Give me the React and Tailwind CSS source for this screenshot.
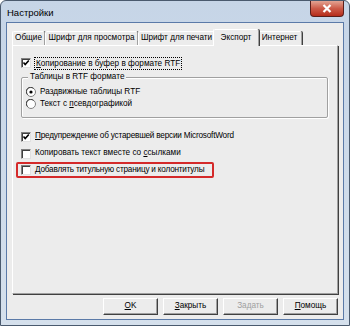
import React from "react";

const font = { fontFamily: '"Liberation Sans", Arial, sans-serif' };

function Check({ checked }) {
  return (
    <span className="relative inline-block w-[10px] h-[10px] bg-white border border-t-[#808080] border-l-[#808080] border-r-[#e0e0e0] border-b-[#e0e0e0] shadow-[inset_1px_1px_0_#404040] shrink-0">
      {checked && (
        <svg width="10" height="10" viewBox="0 0 10 10" className="absolute left-[-1px] top-[-1px]">
          <path d="M2.5 4.5 L4.2 6.5 L7.8 2.5" stroke="#000" strokeWidth="1.6" fill="none" />
        </svg>
      )}
    </span>
  );
}

function Radio({ checked }) {
  return (
    <svg width="10" height="10" viewBox="0 0 10 10" className="shrink-0">
      <circle cx="5" cy="5" r="4.5" fill="#fff" stroke="#808080" strokeWidth="1" />
      <path d="M1.5 7.5 A4 4 0 0 1 7.5 1.5" stroke="#404040" strokeWidth="1" fill="none" />
      {checked && <circle cx="5" cy="5" r="1.6" fill="#000" />}
    </svg>
  );
}

function Tab({ label, selected, w }) {
  if (selected) {
    return (
      <div className={"relative z-10 h-[17px] -mb-[1px] -mx-[2px] bg-[#ececec] border-l border-t border-white rounded-t-[2px] shadow-[1px_0_0_#404040] border-r border-r-[#a0a0a0] flex items-center justify-center whitespace-nowrap text-[8.2px] text-black " + w}>
        {label}
      </div>
    );
  }
  return (
    <div className={"h-[14px] bg-[#ececec] border-l border-t border-white rounded-t-[2px] border-r border-r-[#a0a0a0] shadow-[1px_0_0_#404040] flex items-center justify-center whitespace-nowrap text-[8.2px] text-black " + w}>
      {label}
    </div>
  );
}

function Btn({ children, disabled }) {
  return (
    <div
      className={
        "w-[55px] h-[17px] flex items-center justify-center text-[8.2px] bg-[#ececec] border border-t-white border-l-white border-r-[#404040] border-b-[#404040] shadow-[inset_-1px_-1px_0_#a0a0a0] " +
        (disabled ? "text-[#a0a0a0]" : "text-black")
      }
    >
      {children}
    </div>
  );
}

export default function App() {
  return (
    <div style={font} className="w-[350px] h-[326px] bg-[#ffffff]">
      <div className="w-[350px] h-[326px] flex flex-col rounded-t-[6px] border border-[#4a5a6e] bg-gradient-to-b from-[#c6d5e7] to-[#d5e0ec]">
        {/* title bar */}
        <div className="h-[21px] flex items-start shrink-0">
          <div className="pl-[6px] pt-[7px] text-[9.5px] text-black leading-none">Настройки</div>
          <div className="ml-auto mr-[5px] w-[34px] h-[16px] rounded-b-[4px] border border-t-0 border-[#5a1e1a] bg-gradient-to-b from-[#e2a393] via-[#cc5a48] to-[#b52a18] flex items-center justify-center">
            <svg width="10" height="9" viewBox="0 0 10 9">
              <path d="M1.5 1 L8.5 8 M8.5 1 L1.5 8" stroke="#fff" strokeWidth="2.2" />
            </svg>
          </div>
        </div>
        {/* client */}
        <div className="flex-1 mx-[5px] mb-[5px] border border-[#5b7aa8] bg-[#ececec] flex flex-col px-[5px] pt-[5px]">
          {/* tabs */}
          <div className="flex items-end h-[17px]">
            <Tab label="Общие" w="w-[33px]" />
            <Tab label="Шрифт для просмотра" w="w-[93px]" />
            <Tab label="Шрифт для печати" w="w-[77px]" />
            <Tab label="Экспорт" selected w="w-[46px]" />
            <Tab label="Интернет" w="w-[45px]" />
          </div>
          {/* panel */}
          <div className="h-[249px] bg-[#ececec] border-l border-t border-white border-r border-r-[#a0a0a0] border-b border-b-[#a0a0a0] shadow-[1px_1px_0_#404040] pl-[8px] pr-[9px] pt-[10px] text-[8.2px] text-black whitespace-nowrap">
            <div className="h-[14px] flex items-center gap-[4px]">
              <Check checked />
              <span className="outline outline-1 outline-dotted outline-[#000] px-[1px] leading-[11px]">
                <u>К</u>опирование в буфер в формате RTF
              </span>
            </div>
            {/* group box */}
            <div className="relative mt-[7px] h-[41px] border border-[#a0a0a0] shadow-[inset_1px_1px_0_#fff,1px_1px_0_#fff] rounded-[2px] pl-[4px] pt-[8px]">
              <span className="absolute left-[6px] -top-[7px] px-[2px] bg-[#ececec] leading-[12px]">Таблицы в RTF формате</span>
              <div className="h-[12px] flex items-center gap-[4px]">
                <Radio checked />
                <span>Раздвижные таблицы RTF</span>
              </div>
              <div className="h-[12px] flex items-center gap-[4px]">
                <Radio />
                <span>Текст с <u>п</u>севдографикой</span>
              </div>
            </div>
            <div className="mt-[10px] h-[17px] flex items-center gap-[4px]">
              <Check checked />
              <span className="tracking-[-0.2px]"><u>П</u>редупреждение об устаревшей версии MicrosoftWord</span>
            </div>
            <div className="h-[17px] flex items-center gap-[4px]">
              <Check />
              <span>Копировать текст вместе со <u>с</u>сылками</span>
            </div>
            <div className="-ml-[5px] w-[198px] h-[16px] flex items-center gap-[4px] border-2 border-[#d42a2a] rounded-[2px] pl-[3px]">
              <Check />
              <span className="tracking-[-0.2px]"><u>Д</u>обавлять титульную страницу и колонтитулы</span>
            </div>
          </div>
          {/* buttons */}
          <div className="flex justify-end gap-[5px] mt-[4px]">
            <Btn><span><u>O</u>K</span></Btn>
            <Btn><span><u>З</u>акрыть</span></Btn>
            <Btn disabled><span>Задать</span></Btn>
            <Btn><span><u>П</u>омощь</span></Btn>
          </div>
        </div>
      </div>
    </div>
  );
}
